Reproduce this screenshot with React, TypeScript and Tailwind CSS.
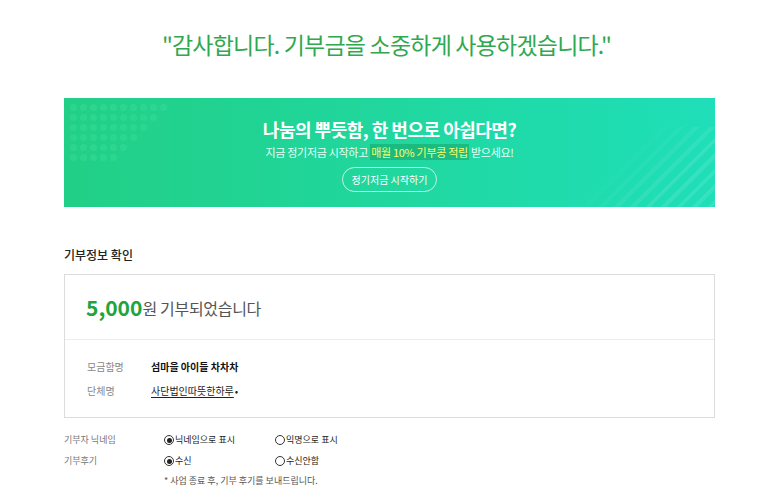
const font = { fontFamily: '"Noto Sans CJK KR", "Noto Sans", sans-serif' }

function Radio({ checked, label }: { checked: boolean; label: string }) {
    return (
        <span className="flex items-center gap-[1px]">
            <span className="flex h-[10px] w-[10px] items-center justify-center rounded-full border border-[#333] bg-white">
                {checked && <span className="h-[5px] w-[5px] rounded-full bg-[#222]" />}
            </span>
            <span>{label}</span>
        </span>
    )
}

export default function App() {
    return (
        <div className="min-h-[495px] w-[773px] bg-white" style={font}>
            {/* Thank-you headline */}
            <h1 className="pt-[26px] text-center text-[23px] leading-[36px] tracking-[-0.8px] text-[#2fa84f]">
                "감사합니다. 기부금을 소중하게 사용하겠습니다."
            </h1>

            {/* Regular donation banner */}
            <div className="relative mx-[64px] mt-[36px] h-[109px] w-[651px] overflow-hidden bg-gradient-to-r from-[#22cf86] via-[#20d79e] to-[#1fdfb9]">
                <div className="absolute left-[6px] top-[6px] grid grid-cols-10 gap-x-[3px] gap-y-[3px] opacity-[0.18]">
                    {Array.from({ length: 60 }).map((_, i) => (
                        <span
                            key={i}
                            className="h-[7px] w-[7px] rounded-full bg-[#5ff0a6]"
                            style={{ opacity: (i % 10) < 10 - Math.floor(i / 10) ? 1 : 0 }}
                        />
                    ))}
                </div>
                <div className="absolute bottom-0 right-0 h-[80px] w-[130px] bg-[repeating-linear-gradient(135deg,rgba(255,255,255,0.10)_0px,rgba(255,255,255,0.10)_4px,transparent_4px,transparent_11px)] [mask-image:linear-gradient(135deg,transparent_30%,black_70%)]" />
                <div className="relative flex flex-col items-center pt-[19px] text-white">
                    <p className="text-[18px] font-bold leading-[24px] tracking-[-0.5px]">
                        나눔의 뿌듯함, 한 번으로 아쉽다면?
                    </p>
                    <p className="mt-[3px] text-[11px] leading-[16px] tracking-[-0.3px] text-[#e9fff4]">
                        지금 정기저금 시작하고{" "}
                        <span className="bg-[#19a86a]/60 px-[1px] text-[#f3ff6e]">매월 10% 기부콩 적립</span> 받으세요!
                    </p>
                    <button className="mt-[7px] h-[25px] w-[95px] rounded-full border border-white/70 text-[10px] leading-none text-white">
                        정기저금 시작하기
                    </button>
                </div>
            </div>

            {/* Donation info */}
            <div className="mx-[64px] w-[651px]">
                <h2 className="mt-[39px] text-[12px] font-medium leading-[18px] text-[#222]">기부정보 확인</h2>

                <div className="mt-[10px] border border-[#dcdcdc]">
                    <div className="flex h-[65px] items-center border-b border-[#ececec] pl-[21px]">
                        <span className="text-[21px] font-bold leading-none text-[#21a43b]">5,000</span>
                        <span className="mt-[2px] text-[16px] leading-none tracking-[-0.3px] text-[#555]">원 기부되었습니다</span>
                    </div>
                    <div className="flex flex-col gap-[9px] pb-[19px] pl-[22px] pt-[19px] text-[10px] leading-[15px]">
                        <div className="flex">
                            <span className="w-[64px] text-[#888]">모금함명</span>
                            <span className="font-bold text-[#111]">섬마을 아이들 차차차</span>
                        </div>
                        <div className="flex">
                            <span className="w-[64px] text-[#888]">단체명</span>
                            <span className="text-[#222] underline underline-offset-2">사단법인따뜻한하루</span>
                            <span className="ml-[1px] text-[#222]">•</span>
                        </div>
                    </div>
                </div>

                <div className="mt-[15px] flex flex-col gap-[7px] text-[9px] leading-[14px] text-[#222]">
                    <div className="flex items-center">
                        <span className="w-[100px] text-[#777]">기부자 닉네임</span>
                        <span className="w-[111px]">
                            <Radio checked label="닉네임으로 표시" />
                        </span>
                        <Radio checked={false} label="익명으로 표시" />
                    </div>
                    <div className="flex items-center">
                        <span className="w-[100px] text-[#777]">기부후기</span>
                        <span className="w-[111px]">
                            <Radio checked label="수신" />
                        </span>
                        <Radio checked={false} label="수신안함" />
                    </div>
                    <p className="-mt-[1px] pl-[100px] text-[#555]">* 사업 종료 후, 기부 후기를 보내드립니다.</p>
                </div>
            </div>
        </div>
    )
}
